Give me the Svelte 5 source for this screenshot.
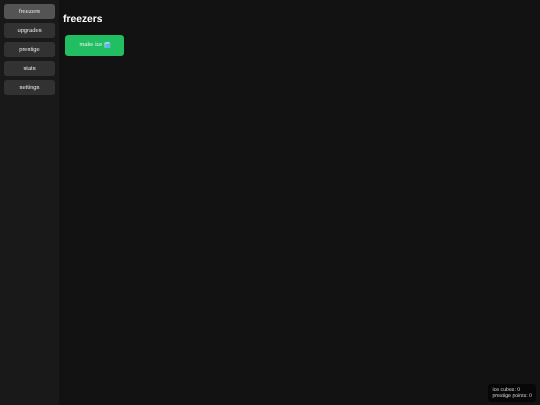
<script>
  const tabs = ['freezers', 'upgrades', 'prestige', 'stats', 'settings'];
  let active = $state('freezers');
</script>

<div class="game">
  <nav class="sidebar">
    {#each tabs as tab}
      <button class="tab" class:active={tab === active} onclick={() => (active = tab)}>{tab}</button>
    {/each}
  </nav>
  <main class="content">
    <h1>freezers</h1>
    <button class="make">
      make ice
      <svg class="cube" viewBox="0 0 8 8" width="6.5" height="6.5" aria-hidden="true">
        <path d="M.4 1 6 .4 7.6 1.4V7L2 7.7.4 6.6z" fill="#7fcdf0" />
        <path d="M.4 1 6 .4 7.6 1.4 2 2.2z" fill="#cfeefa" />
        <path d="M2 2.2 7.6 1.4V7L2 7.7z" fill="#62b6e2" />
      </svg>
    </button>
  </main>
  <div class="stats">
    <div>ice cubes: 0</div>
    <div>prestige points: 0</div>
  </div>
</div>

<style>
  :global(body) {
    margin: 0;
    background: #121212;
  }
  .game {
    position: relative;
    display: flex;
    height: 405px;
    overflow: hidden;
    font-family: "Liberation Sans", Arial, sans-serif;
    color: #fff;
    opacity: 0.999;
    will-change: opacity;
    text-rendering: geometricPrecision;
  }
  .sidebar {
    width: 59px;
    box-sizing: border-box;
    padding: 4px;
    display: flex;
    flex-direction: column;
    gap: 4px;
    background: #1a1a1a;
  }
  .tab {
    height: 15px;
    padding: 0;
    border: none;
    border-radius: 3px;
    background: #333;
    color: #e8e8e8;
    font: 5.8px "Liberation Sans", Arial, sans-serif;
    text-rendering: inherit;
  }
  .tab.active {
    background: #555;
  }
  .content {
    flex: 1;
    padding: 12px 4px;
  }
  h1 {
    margin: 0 0 10px;
    font-size: 10.3px;
    line-height: 14px;
    font-weight: 700;
    position: relative;
    top: 0.5px;
  }
  .make {
    display: flex;
    align-items: center;
    justify-content: center;
    gap: 1.5px;
    width: 59px;
    height: 21px;
    margin-left: 2px;
    margin-top: -1px;
    padding: 0 0 1px 1px;
    border: none;
    border-radius: 3.5px;
    background: #22c063;
    color: #f0f0f0;
    font: 5.8px "Liberation Sans", Arial, sans-serif;
    text-rendering: inherit;
  }
  .stats {
    position: absolute;
    right: 4px;
    bottom: 3px;
    padding: 3px 4px;
    border-radius: 3px;
    background: rgba(0, 0, 0, 0.6);
    color: #ddd;
    font-size: 5.2px;
    line-height: 6px;
  }
</style>
